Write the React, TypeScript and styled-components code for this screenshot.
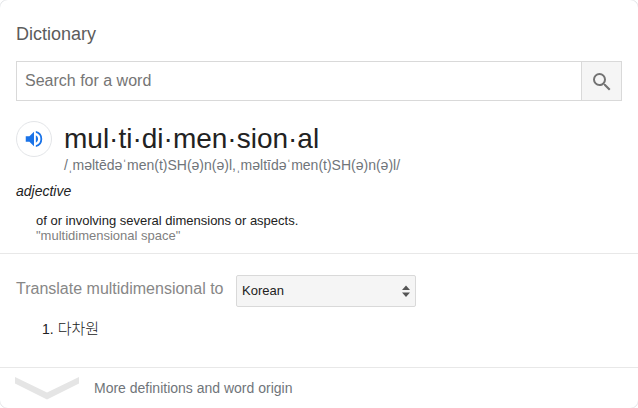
import React from "react";
import styled, { createGlobalStyle } from "styled-components";

const GlobalStyle = createGlobalStyle`
  *, *::before, *::after { box-sizing: border-box; }
  html, body { margin: 0; padding: 0; background: #fff; overflow: hidden; }
  body {
    font-family: "Liberation Sans", Arial, "Noto Sans CJK KR", sans-serif;
    color: #222;
  }
`;

const Card = styled.main`
  width: 640px;
  height: 410px;
  margin: -1px;
  border: 1px solid #e3e5e8;
  border-radius: 9px;
  background: #fff;
  overflow: hidden;
  display: flex;
  flex-direction: column;
`;

const Entry = styled.section`
  height: 254px;
  padding: 23px 16px 0;
  border-bottom: 1px solid #e8e8e8;
`;

const Title = styled.h1`
  margin: 0;
  font-size: 18px;
  line-height: 22px;
  font-weight: 400;
  color: #5c5c5c;
`;

const SearchBar = styled.form`
  display: flex;
  width: 606px;
  height: 40px;
  margin-top: 16px;
  border: 1px solid #d9d9d9;
`;

const SearchInput = styled.input`
  flex: 1;
  min-width: 0;
  padding: 0 8px;
  border: 0;
  outline: 0;
  background: transparent;
  font: 16px "Liberation Sans", Arial, sans-serif;
  &::placeholder { color: #757575; opacity: 1; }
`;

const SearchButton = styled.button`
  width: 40px;
  padding: 2px 0 0;
  border: 0;
  border-left: 1px solid #d9d9d9;
  background: #f5f5f5;
  display: grid;
  place-items: center;
`;

const Headword = styled.div`
  display: flex;
  margin-top: 20px;
`;

const SpeakerButton = styled.button`
  width: 36px;
  height: 36px;
  margin-right: 12px;
  padding: 0;
  border: 1px solid #e3e5e8;
  border-radius: 50%;
  background: #fff;
  display: grid;
  place-items: center;
`;

const Word = styled.div`
  padding-top: 1px;
  font-size: 28px;
  line-height: 34px;
  white-space: nowrap;
`;

const Phonetic = styled.div`
  font-size: 14px;
  line-height: 18px;
  color: #70757a;
  white-space: nowrap;
`;

const PartOfSpeech = styled.div`
  margin-top: 9px;
  font-size: 14px;
  line-height: 16px;
  font-style: italic;
`;

const Sense = styled.div`
  margin: 14px 0 0 20px;
  font-size: 13px;
  line-height: 15px;
`;

const Example = styled.div`
  color: #808080;
`;

const Translation = styled.section`
  height: 114px;
  padding: 21px 16px 0;
  border-bottom: 1px solid #e8e8e8;
`;

const TranslateRow = styled.div`
  display: flex;
`;

const TranslateLabel = styled.div`
  width: 220px;
  padding-top: 4px;
  font-size: 16px;
  line-height: 20px;
  color: #878787;
  white-space: nowrap;
`;

const LanguagePicker = styled.button`
  display: flex;
  align-items: center;
  justify-content: space-between;
  width: 180px;
  height: 32px;
  padding: 0 5px;
  border: 1px solid #d9d9d9;
  border-radius: 2px;
  background: #f5f5f5;
  font: 13px "Liberation Sans", Arial, sans-serif;
  color: #222;
`;

const LanguageName = styled.span`
  padding-bottom: 2px;
`;

const Results = styled.div`
  display: flex;
  gap: 4px;
  margin: 13px 0 0 26px;
  font-size: 14px;
  line-height: 18px;
`;

const Korean = styled.span`
  margin-top: -1px;
  font-family: "Noto Sans CJK KR", sans-serif;
  font-size: 15px;
  font-weight: 300;
`;

const Footer = styled.footer`
  display: flex;
  align-items: flex-start;
  padding: 9px 15px 0;
`;

const FooterText = styled.span`
  margin: 2px 0 0 15px;
  font-size: 14px;
  line-height: 18px;
  color: #70757a;
`;

export default function App() {
  return (
    <>
      <GlobalStyle />
      <Card>
        <Entry>
          <Title>Dictionary</Title>
          <SearchBar onSubmit={(e) => e.preventDefault()}>
            <SearchInput placeholder="Search for a word" aria-label="Search for a word" />
            <SearchButton type="submit" aria-label="Search">
              <svg width="24" height="24" viewBox="0 0 24 24" fill="#737373">
                <path d="M15.5 14h-.79l-.28-.27A6.47 6.47 0 0 0 16 9.5 6.5 6.5 0 1 0 9.5 16c1.61 0 3.09-.59 4.23-1.57l.27.28v.79l5 4.99L20.49 19l-4.99-5zm-6 0a4.5 4.5 0 1 1 0-9 4.5 4.5 0 0 1 0 9z" />
              </svg>
            </SearchButton>
          </SearchBar>
          <Headword>
            <SpeakerButton aria-label="Listen">
              <svg width="22" height="22" viewBox="0 0 24 24" fill="#1a73e8">
                <path d="M3 9v6h4l5 5V4L7 9H3zm13.5 3A4.5 4.5 0 0 0 14 7.97v8.05A4.48 4.48 0 0 0 16.5 12zM14 3.23v2.06a7 7 0 0 1 0 13.42v2.06a9 9 0 0 0 0-17.54z" />
              </svg>
            </SpeakerButton>
            <div>
              <Word>mul·ti·di·men·sion·al</Word>
              <Phonetic>/ˌməltēdəˈmen(t)SH(ə)n(ə)l,ˌməltīdəˈmen(t)SH(ə)n(ə)l/</Phonetic>
            </div>
          </Headword>
          <PartOfSpeech>adjective</PartOfSpeech>
          <Sense>
            <div>of or involving several dimensions or aspects.</div>
            <Example>"multidimensional space"</Example>
          </Sense>
        </Entry>
        <Translation>
          <TranslateRow>
            <TranslateLabel>Translate multidimensional to</TranslateLabel>
            <LanguagePicker>
              <LanguageName>Korean</LanguageName>
              <svg width="8" height="12" viewBox="0 0 8 12" fill="#555">
                <path d="M0 5 4 0.5 8 5zM0 7.5h8L4 12z" />
              </svg>
            </LanguagePicker>
          </TranslateRow>
          <Results>
            <span>1.</span>
            <Korean lang="ko">다차원</Korean>
          </Results>
        </Translation>
        <Footer>
          <svg width="64" height="23" viewBox="0 0 64 23" fill="#e5e5e5">
            <path d="M0 0 32 15.5 64 0v6.5L32 22.5 0 6.5z" />
          </svg>
          <FooterText>More definitions and word origin</FooterText>
        </Footer>
      </Card>
    </>
  );
}
